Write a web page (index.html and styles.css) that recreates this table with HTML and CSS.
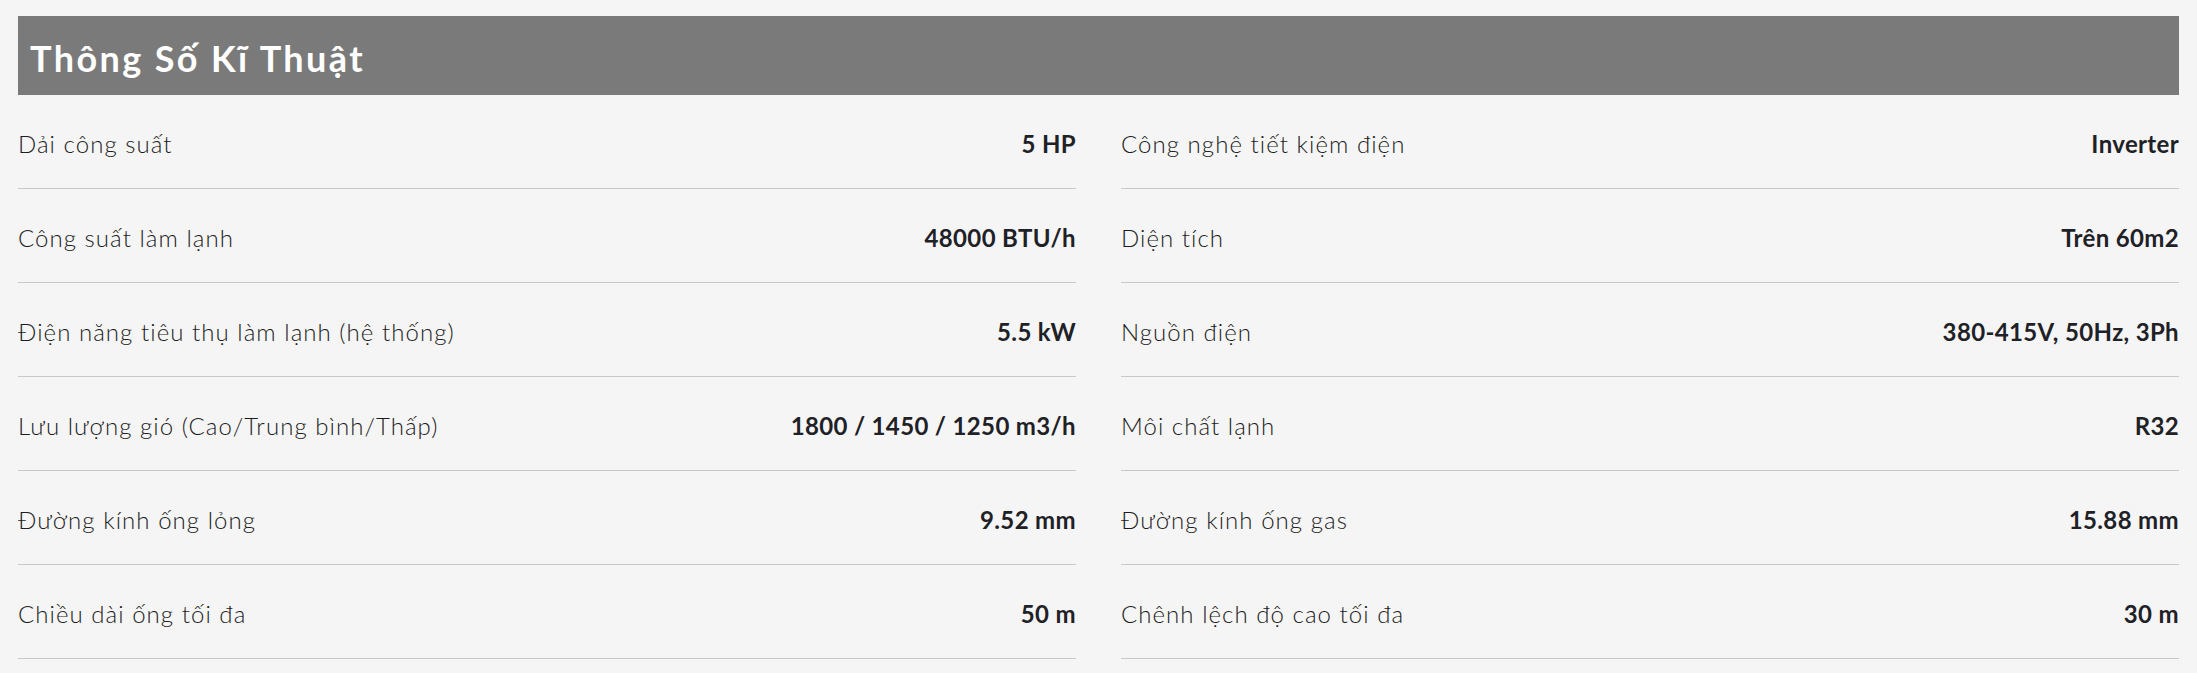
FILE: index.html
```html
<!DOCTYPE html>
<html lang="vi">
<head>
<meta charset="utf-8">
<title>Thông Số Kĩ Thuật</title>
<link rel="stylesheet" href="styles.css">
</head>
<body>
<section class="specs">
  <h2 class="specs-title">Thông Số Kĩ Thuật</h2>
  <div class="specs-grid">
    <div class="spec-row"><span class="spec-label">Dải công suất</span><span class="spec-value">5 HP</span></div>
    <div class="spec-row"><span class="spec-label">Công nghệ tiết kiệm điện</span><span class="spec-value">Inverter</span></div>
    <div class="spec-row"><span class="spec-label">Công suất làm lạnh</span><span class="spec-value">48000 BTU/h</span></div>
    <div class="spec-row"><span class="spec-label">Diện tích</span><span class="spec-value">Trên 60m2</span></div>
    <div class="spec-row"><span class="spec-label">Điện năng tiêu thụ làm lạnh (hệ thống)</span><span class="spec-value">5.5 kW</span></div>
    <div class="spec-row"><span class="spec-label">Nguồn điện</span><span class="spec-value">380-415V, 50Hz, 3Ph</span></div>
    <div class="spec-row"><span class="spec-label">Lưu lượng gió (Cao/Trung bình/Thấp)</span><span class="spec-value">1800 / 1450 / 1250 m3/h</span></div>
    <div class="spec-row"><span class="spec-label">Môi chất lạnh</span><span class="spec-value">R32</span></div>
    <div class="spec-row"><span class="spec-label">Đường kính ống lỏng</span><span class="spec-value">9.52 mm</span></div>
    <div class="spec-row"><span class="spec-label">Đường kính ống gas</span><span class="spec-value">15.88 mm</span></div>
    <div class="spec-row"><span class="spec-label">Chiều dài ống tối đa</span><span class="spec-value">50 m</span></div>
    <div class="spec-row"><span class="spec-label">Chênh lệch độ cao tối đa</span><span class="spec-value">30 m</span></div>
  </div>
</section>
</body>
</html>
```
FILE: styles.css
```css
html, body {
  margin: 0;
  padding: 0;
  background: #f5f5f5;
}
body {
  font-family: "Lato", "Inter", "Noto Sans", sans-serif;
  color: #222;
}
.specs {
  padding: 16px 18px 0 18px;
}
.specs-title {
  margin: 0;
  height: 79px;
  box-sizing: border-box;
  display: flex;
  align-items: center;
  padding: 4px 0 0 12px;
  background: #7a7a7a;
  color: #ffffff;
  font-size: 36px;
  font-weight: 700;
  letter-spacing: 2.4px;
}
.specs-grid {
  display: grid;
  grid-template-columns: 1fr 1fr;
  column-gap: 45px;
}
.spec-row {
  height: 94px;
  box-sizing: border-box;
  border-bottom: 1px solid #c9c9c9;
  display: flex;
  align-items: center;
  justify-content: space-between;
  padding-top: 3px;
}
.spec-label {
  font-size: 24px;
  font-weight: 300;
  color: #1c1c22;
  letter-spacing: 1.05px;
}
.spec-value {
  font-size: 24px;
  font-weight: 700;
  color: #1e2126;
  letter-spacing: 0.35px;
}
```
